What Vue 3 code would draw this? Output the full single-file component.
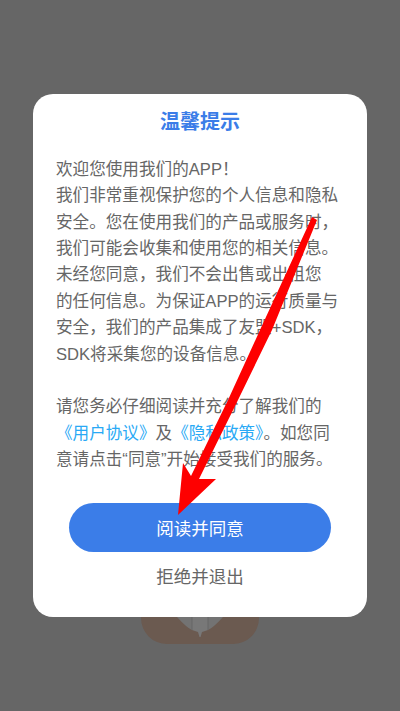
<script setup>
const lines = [
  '我们非常重视保护您的个人信息和隐私',
  '安全。您在使用我们的产品或服务时，',
  '我们可能会收集和使用您的相关信息。',
  '未经您同意，我们不会出售或出租您',
  '的任何信息。为保证APP的运行质量与',
  '安全，我们的产品集成了友盟+SDK，',
  'SDK将采集您的设备信息。',
]
</script>

<template>
  <div class="screen">
    <!-- app logo peeking out behind the dialog -->
    <div class="logo">
      <svg class="logo-mark" width="46" height="20" viewBox="0 0 46 20">
        <path d="M0 0 Q10 11 15 13 V0 Z M46 0 Q36 11 31 13 V0 Z" fill="#737373" />
        <path d="M15 0 H31 V13 L25 15 L23.5 20 H22.5 L21 15 L15 13 Z" fill="#787878" />
        <path d="M15 0 V13 M31 0 V13" stroke="#666666" stroke-width="1" fill="none" />
      </svg>
    </div>

    <div class="dialog">
      <h1 class="title">温馨提示</h1>
      <div class="body">
        <p>欢迎您使用我们的APP！</p>
        <p v-for="line in lines" :key="line">{{ line }}</p>
        <p class="blank"></p>
        <p>请您务必仔细阅读并充分了解我们的</p>
        <p><span class="link">《用户协议》</span>及<span class="link">《隐私政策》</span>。如您同</p>
        <p>意请点击“同意”开始接受我们的服务。</p>
      </div>
      <button class="agree">阅读并同意</button>
      <button class="refuse">拒绝并退出</button>
    </div>

    <!-- red annotation arrow drawn over the screenshot -->
    <svg class="arrow" width="400" height="711" viewBox="0 0 400 711">
      <polygon points="312,217 317,220 272,330 238,400 199,479 216,479 178,515 183,463 191,476 228,400 260,330" fill="#fe0000" />
    </svg>
  </div>
</template>

<style scoped>
.screen {
  position: relative;
  width: 400px;
  height: 711px;
  overflow: hidden;
  background: #666666;
  display: flex;
  justify-content: center;
  padding-top: 94px;
  box-sizing: border-box;
  font-family: "Liberation Sans", "Noto Sans CJK SC", sans-serif;
}

.logo {
  position: absolute;
  left: 141px;
  top: 580px;
  width: 118px;
  height: 64px;
  border-radius: 0 0 26px 26px;
  background: #6b5a50;
  display: flex;
  justify-content: center;
  align-items: flex-start;
  padding-top: 37px;
  box-sizing: border-box;
}

.logo-mark {
  display: block;
}

.dialog {
  position: relative;
  width: 334px;
  height: 523px;
  background: #fff;
  border-radius: 20px;
  box-sizing: border-box;
  display: flex;
  flex-direction: column;
  align-items: center;
}

.title {
  margin: 15px 0 0;
  font-size: 20px;
  line-height: 26px;
  font-weight: 700;
  color: #3b7de8;
}

.body {
  width: 100%;
  margin-top: 21.8px;
  padding-left: 23px;
  box-sizing: border-box;
  font-size: 16.6px;
  line-height: 26.4px;
  color: #666666;
}

.body p {
  margin: 0;
  white-space: nowrap;
}

.body .blank {
  height: 26.4px;
}

.link {
  color: #29a9f5;
}

.agree {
  margin-top: 29.4px;
  width: 262px;
  height: 49px;
  border: none;
  border-radius: 25px;
  background: #3b7de8;
  color: #fff;
  font-family: inherit;
  font-size: 17.5px;
  padding: 0;
}

.refuse {
  margin-top: 13px;
  border: none;
  background: none;
  color: #666666;
  font-family: inherit;
  font-size: 17.5px;
  line-height: 24px;
  padding: 0;
}

.arrow {
  position: absolute;
  left: 0;
  top: 0;
  pointer-events: none;
}
</style>
